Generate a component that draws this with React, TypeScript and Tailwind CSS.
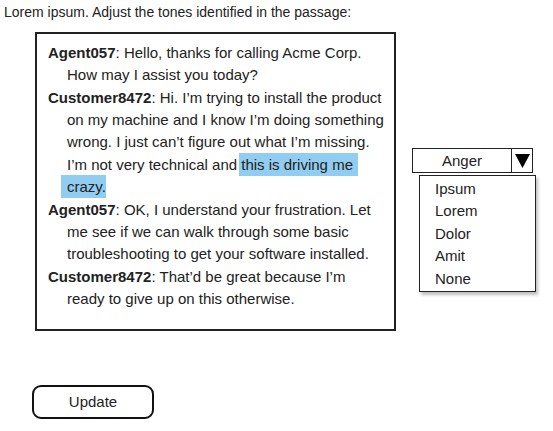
import React from "react";

type Line = { speaker: string; text: React.ReactNode };

const TONES = ["Ipsum", "Lorem", "Dolor", "Amit", "None"];

const TRANSCRIPT: Line[] = [
  { speaker: "Agent057", text: "Hello, thanks for calling Acme Corp. How may I assist you today?" },
  {
    speaker: "Customer8472",
    text: (
      <>
        Hi. I’m trying to install the product on my machine and I know I’m doing something wrong. I just
        can’t figure out what I’m missing. I’m not very technical and{" "}
        <span className="bg-[#90cdf0] py-[3px] pr-[5px] -mr-[5px] -ml-[2px] pl-[2px]">this is driving me</span>{" "}
        <span className="bg-[#90cdf0] py-[3px] pl-[6px] -ml-[6px]">crazy.</span>
      </>
    ),
  },
  {
    speaker: "Agent057",
    text: "OK, I understand your frustration. Let me see if we can walk through some basic troubleshooting to get your software installed.",
  },
  { speaker: "Customer8472", text: "That’d be great because I’m ready to give up on this otherwise." },
];

function ToneSelect() {
  return (
    <div className="ml-[16px] mt-[127px] flex flex-col">
      <div className="flex h-[25px] w-[121px] border border-[#222] bg-white">
        <div className="flex-1 text-center text-[15px] leading-[23px]">Anger</div>
        <div className="flex w-[21px] items-center justify-center border-l border-[#222]">
          <svg width="15" height="14" viewBox="0 0 15 14">
            <path d="M0 0 H15 L7.5 14 Z" fill="#000" />
          </svg>
        </div>
      </div>
      <ul className="ml-[7px] mt-[2px] h-[117px] w-[117px] border border-[#222] bg-white pl-[15px] pt-[2px] shadow-[2px_3px_3px_rgba(0,0,0,0.25)]">
        {TONES.map((t) => (
          <li key={t} className="text-[15px] leading-[22.4px]">
            {t}
          </li>
        ))}
      </ul>
    </div>
  );
}

export default function App() {
  return (
    <div className="h-[431px] w-[553px] bg-white font-['Liberation_Sans',Arial,sans-serif] text-[#222]">
      <p className="pl-[4px] pt-[3px] text-[14px] leading-[18px]">
        Lorem ipsum. Adjust the tones identified in the passage:
      </p>

      <div className="flex items-start">
        {/* passage */}
        <div className="ml-[35px] mt-[11px] h-[299px] w-[361px] border-2 border-[#222] pl-[11px] pr-[8px] pt-[8px]">
          {TRANSCRIPT.map((line, i) => (
            <p key={i} className="pl-[19px] -indent-[19px] text-[15px] leading-[22.36px]">
              <b>{line.speaker}</b>: {line.text}
            </p>
          ))}
        </div>

        <ToneSelect />
      </div>

      <button className="ml-[32px] mt-[54px] h-[34px] w-[122px] rounded-[9px] border-2 border-[#111] text-[15px]">
        Update
      </button>
    </div>
  );
}
